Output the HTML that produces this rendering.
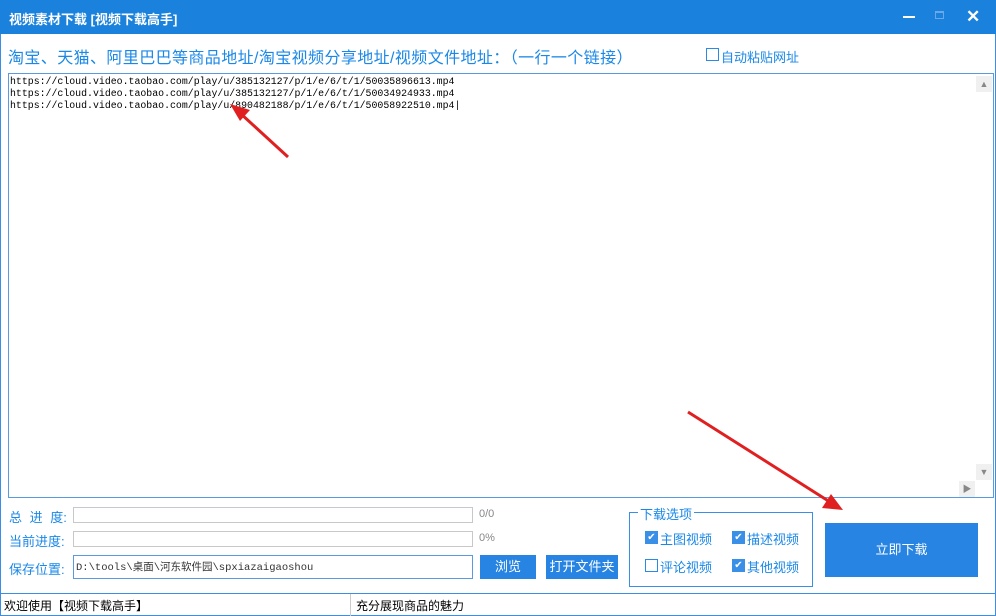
<!DOCTYPE html>
<html><head><meta charset="utf-8"><style>
*{margin:0;padding:0;box-sizing:border-box}
body{width:996px;height:616px;background:#fff;position:relative;overflow:hidden;font-family:"Liberation Sans","Noto Sans CJK SC",sans-serif;font-size:13px}
.a{position:absolute}
.title{left:0;top:0;width:996px;height:34px;background:#1a82dc;color:#fff}
.blue{color:#1a88e8}
.frame{left:0;top:34px;width:996px;height:582px;border:1px solid #3a8ee6;border-top:none}
.ta{left:8px;top:73px;width:986px;height:425px;border:1px solid #5a9be0;background:#fff}
.mono{font-family:"Liberation Mono","Noto Sans CJK SC",monospace;font-size:10px;line-height:12px;color:#000}
.bar{border:1px solid #c8c8c8;background:#fff;height:16px}
.btn{background:#2784e2;color:#fff;font-size:13px;text-align:center}
.cb{width:13px;height:13px;border:1px solid #2a8ae6;background:#fff}
.cbc{width:13px;height:13px;background:#3a8fe6;color:#fff;font-size:10px;line-height:13px;text-align:center}
</style></head><body>
<div class="a title">
<div class="a" style="left:9px;top:9px;font-size:13px;font-weight:bold">视频素材下载 [视频下载高手]</div>
<div class="a" style="left:903px;top:16px;width:12px;height:2px;background:#fff"></div>
<div class="a" style="left:935px;top:11px;width:9px;height:8px;border:1px solid #6aa8e8;border-top-width:2px"></div>
<div class="a" style="left:966px;top:7px;font-size:17px;font-weight:bold">✕</div>
</div>
<div class="a frame"></div>
<div class="a blue" style="left:8px;top:44px;font-size:16px;letter-spacing:0.4px">淘宝、天猫、阿里巴巴等商品地址/淘宝视频分享地址/视频文件地址：（一行一个链接）</div>
<div class="a cb" style="left:706px;top:48px"></div>
<div class="a blue" style="left:721px;top:47px;font-size:13px">自动粘贴网址</div>
<div class="a ta">
<div class="a mono" style="left:1px;top:2px;font-size:9.9px">https://cloud.video.taobao.com/play/u/385132127/p/1/e/6/t/1/50035896613.mp4<br>https://cloud.video.taobao.com/play/u/385132127/p/1/e/6/t/1/50034924933.mp4<br>https://cloud.video.taobao.com/play/u/890482188/p/1/e/6/t/1/50058922510.mp4|</div>
<div class="a" style="left:967px;top:2px;width:16px;height:16px;background:#f0f0f0;color:#888;font-size:9px;text-align:center;line-height:16px">▲</div>
<div class="a" style="left:967px;top:390px;width:16px;height:16px;background:#f0f0f0;color:#888;font-size:9px;text-align:center;line-height:16px">▼</div>
<div class="a" style="left:950px;top:407px;width:16px;height:16px;background:#f0f0f0;color:#888;font-size:9px;text-align:center;line-height:16px">▶</div>
</div>
<div class="a blue" style="left:9px;top:507px;font-size:13px;word-spacing:4px">总 进 度:</div>
<div class="a bar" style="left:73px;top:507px;width:400px"></div>
<div class="a" style="left:479px;top:508px;font-size:11px;color:#888">0/0</div>
<div class="a blue" style="left:9px;top:531px;font-size:13px">当前进度:</div>
<div class="a bar" style="left:73px;top:531px;width:400px"></div>
<div class="a" style="left:479px;top:532px;font-size:11px;color:#888">0%</div>
<div class="a blue" style="left:9px;top:559px;font-size:13px">保存位置:</div>
<div class="a mono" style="left:73px;top:555px;width:400px;height:24px;border:1px solid #5a9be0;padding:6px 2px;font-size:10.5px;color:#333">D:\tools\桌面\河东软件园\spxiazaigaoshou</div>
<div class="a btn" style="left:480px;top:555px;width:56px;height:24px;line-height:24px">浏览</div>
<div class="a btn" style="left:546px;top:555px;width:72px;height:24px;line-height:24px">打开文件夹</div>
<div class="a" style="left:629px;top:512px;width:184px;height:75px;border:1px solid #3a8ee6"></div>
<div class="a blue" style="left:638px;top:504px;background:#fff;padding:0 2px;font-size:13px">下载选项</div>
<div class="a cbc" style="left:645px;top:531px">✔</div><div class="a blue" style="left:660px;top:529px">主图视频</div>
<div class="a cbc" style="left:732px;top:531px">✔</div><div class="a blue" style="left:747px;top:529px">描述视频</div>
<div class="a cb" style="left:645px;top:559px"></div><div class="a blue" style="left:660px;top:557px">评论视频</div>
<div class="a cbc" style="left:732px;top:559px">✔</div><div class="a blue" style="left:747px;top:557px">其他视频</div>
<div class="a btn" style="left:825px;top:523px;width:153px;height:54px;line-height:54px">立即下载</div>
<div class="a" style="left:0;top:593px;width:996px;height:1px;background:#3a8ee6"></div>
<div class="a" style="left:350px;top:594px;width:1px;height:22px;background:#ccc"></div>
<div class="a" style="left:4px;top:597px;font-size:12px;color:#000">欢迎使用【视频下载高手】</div>
<div class="a" style="left:356px;top:597px;font-size:12px;color:#000">充分展现商品的魅力</div>
<svg class="a" style="left:0;top:0" width="996" height="616">
<g stroke="#e02020" stroke-width="3" fill="#e02020">
<line x1="288" y1="157" x2="240" y2="113"/>
<polygon points="230,104 250,110 240,121" stroke="none"/>
<line x1="688" y1="412" x2="830" y2="502"/>
<polygon points="843,510 822,508 831,494" stroke="none"/>
</g></svg>
</body></html>
